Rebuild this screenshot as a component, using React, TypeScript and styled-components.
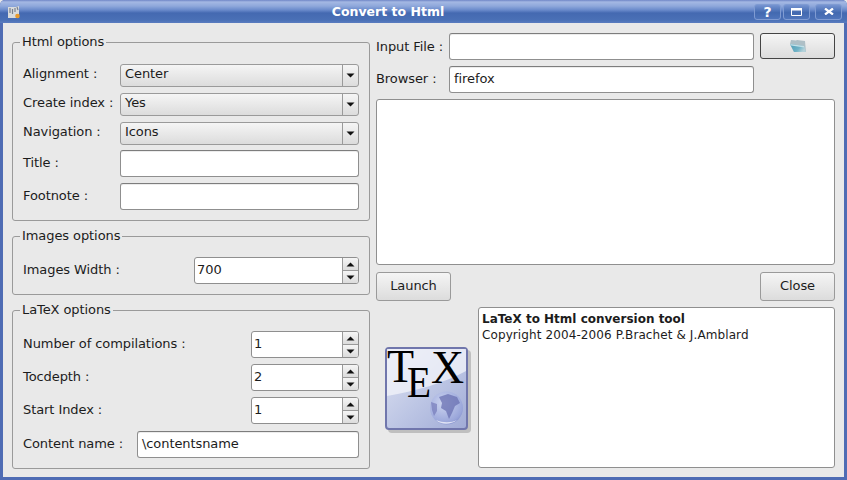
import React from 'react';
import styled, { createGlobalStyle } from 'styled-components';

const GlobalStyle = createGlobalStyle`
  html, body {
    margin: 0;
    padding: 0;
    background: #e9e9e9;
  }
  * {
    box-sizing: border-box;
  }
`;

const comboRows = [
  { label: 'Alignment :', value: 'Center' },
  { label: 'Create index :', value: 'Yes' },
  { label: 'Navigation :', value: 'Icons' },
];

const latexSpins = [
  { label: 'Number of compilations :', value: '1' },
  { label: 'Tocdepth :', value: '2' },
  { label: 'Start Index :', value: '1' },
];

const Arrow = ({ up }: { up?: boolean }) => (
  <svg width="9" height="5" viewBox="0 0 9 5">
    <path d={up ? 'M4.5 0.5 L8.5 4.5 L0.5 4.5 Z' : 'M0.5 0.5 L8.5 0.5 L4.5 4.5 Z'} fill="#111" />
  </svg>
);

const Combo = ({ value }: { value: string }) => (
  <ComboBox>
    <ComboText>{value}</ComboText>
    <ComboArrow>
      <Arrow />
    </ComboArrow>
  </ComboBox>
);

const Spin = ({ value, width }: { value: string; width: number }) => (
  <SpinBox $width={width}>
    <SpinText>{value}</SpinText>
    <SpinButtons>
      <SpinButton>
        <Arrow up />
      </SpinButton>
      <SpinButton>
        <Arrow />
      </SpinButton>
    </SpinButtons>
  </SpinBox>
);

const App = () => {
  return (
    <Window>
      <GlobalStyle />
      <TitleBar>
        <AppIcon>
          <svg width="14" height="14" viewBox="0 0 14 14">
            <path d="M1 2 H9 L12 1 V13 H1 Z" fill="#d9dbdc" />
            <path d="M3 3 V8 M5.5 4 V9 M8 3 V7 M10 2 L11 5" stroke="#78808e" strokeWidth="1.2" />
            <circle cx="10.5" cy="11" r="2.3" fill="#e89a2c" />
          </svg>
        </AppIcon>
        <Title>Convert to Html</Title>
        <TitleButtons>
          <TitleButton>
            <HelpMark>?</HelpMark>
          </TitleButton>
          <TitleButton>
            <svg width="11" height="8" viewBox="0 0 11 8">
              <path d="M0.5 0.5 H10.5 V7.5 H0.5 Z" fill="none" stroke="#fff" />
              <rect x="0" y="0" width="11" height="2.5" fill="#fff" />
            </svg>
          </TitleButton>
          <CloseButton>
            <svg width="10" height="7" viewBox="0 0 10 7">
              <path d="M1 0.5 L9 6.5 M9 0.5 L1 6.5" stroke="#fff" strokeWidth="2.2" />
            </svg>
          </CloseButton>
        </TitleButtons>
      </TitleBar>
      <Body>
        <LeftColumn>
          <Group $height={179}>
            <GroupTitle>Html options</GroupTitle>
            <ComboList>
              {comboRows.map((row) => (
                <Row key={row.label} $labelWidth={97}>
                  <ComboLabel>{row.label}</ComboLabel>
                  <Combo value={row.value} />
                </Row>
              ))}
            </ComboList>
            <InputList>
              <Row $labelWidth={97}>
                <Label>Title :</Label>
                <Field />
              </Row>
              <Row $labelWidth={97}>
                <Label>Footnote :</Label>
                <Field />
              </Row>
            </InputList>
          </Group>
          <Group $height={59}>
            <GroupTitle>Images options</GroupTitle>
            <SpinRow>
              <Label>Images Width :</Label>
              <Spin value="700" width={165} />
            </SpinRow>
          </Group>
          <Group $height={159}>
            <GroupTitle>LaTeX options</GroupTitle>
            <SpinList>
              {latexSpins.map((row) => (
                <SpinRow key={row.label}>
                  <Label>{row.label}</Label>
                  <Spin value={row.value} width={108} />
                </SpinRow>
              ))}
            </SpinList>
            <ContentRow $labelWidth={114}>
              <Label>Content name :</Label>
              <Field>\contentsname</Field>
            </ContentRow>
          </Group>
        </LeftColumn>
        <RightColumn>
          <FileRow>
            <Label>Input File :</Label>
            <Field />
            <FolderButton>
              <svg width="18" height="14" viewBox="0 0 18 14">
                <defs>
                  <linearGradient id="folder" x1="0" y1="0" x2="1" y2="0.4">
                    <stop offset="0" stopColor="#4f9db6" />
                    <stop offset="0.65" stopColor="#6fb2c6" />
                    <stop offset="1" stopColor="#b4d2da" />
                  </linearGradient>
                </defs>
                <path d="M1 5 L2 1 L7 1.5 L8 1 L16 2 L17 13 L5 13 Z" fill="#aebfc6" />
                <path d="M1 5 L15 7 L17 13 L5 13 Z" fill="url(#folder)" />
                <path d="M1 5 L15 7 L15.5 8.5 L2 6.5 Z" fill="#c3e0e8" />
              </svg>
            </FolderButton>
          </FileRow>
          <BrowserRow>
            <Label>Browser :</Label>
            <Field>firefox</Field>
          </BrowserRow>
          <Output />
          <ActionRow>
            <PushButton>Launch</PushButton>
            <PushButton>Close</PushButton>
          </ActionRow>
          <AboutRow>
            <LogoCell>
              <svg width="88" height="88" viewBox="0 0 88 88">
                <defs>
                  <linearGradient id="tile" x1="0" y1="0" x2="1" y2="1">
                    <stop offset="0" stopColor="#dfe3f2" />
                    <stop offset="0.55" stopColor="#bcc5e4" />
                    <stop offset="1" stopColor="#a0abd6" />
                  </linearGradient>
                  <radialGradient id="globe" cx="0.4" cy="0.35" r="0.8">
                    <stop offset="0" stopColor="#cdd5f0" />
                    <stop offset="0.75" stopColor="#9aa6da" />
                    <stop offset="1" stopColor="#7683c4" />
                  </radialGradient>
                </defs>
                <rect x="3" y="3" width="83" height="83" rx="4" fill="#9c9c9c" opacity="0.55" />
                <rect x="1" y="1" width="81" height="81" rx="3" fill="url(#tile)" stroke="#7076ac" strokeWidth="2" />
                <path d="M2 2 H81 V24 C60 36 30 44 2 49 Z" fill="#f3f4fa" opacity="0.75" />
                <circle cx="61.5" cy="61" r="16.5" fill="url(#globe)" />
                <path d="M54 50 L63 47 L72 50 L75 56 L70 59 L67 66 L64 72 L61 64 L56 61 L57 56 Z" fill="#6a70b2" opacity="0.75" />
                <path d="M46 55 L52 57 L52 64 L49 69 L47 63 Z" fill="#6a70b2" opacity="0.6" />
                <path d="M51 73 C58 76 66 76 72 73 C66 78 56 78 51 73 Z" fill="#f1f2fa" opacity="0.8" />
                <LogoText x="2" y="35" fontSize="46" textLength="27" lengthAdjust="spacingAndGlyphs">T</LogoText>
                <LogoText x="22" y="50" fontSize="45" textLength="24" lengthAdjust="spacingAndGlyphs">E</LogoText>
                <LogoText x="46" y="36" fontSize="47" textLength="33" lengthAdjust="spacingAndGlyphs">X</LogoText>
              </svg>
            </LogoCell>
            <AboutBox>
              <AboutTitle>LaTeX to Html conversion tool</AboutTitle>
              <AboutLine>Copyright 2004-2006 P.Brachet &amp; J.Amblard</AboutLine>
            </AboutBox>
          </AboutRow>
        </RightColumn>
      </Body>
    </Window>
  );
};

export default App;

const Window = styled.div`
  width: 847px;
  height: 480px;
  display: flex;
  flex-direction: column;
  background: #4f6cb4;
  border-radius: 5px 5px 0 0;
  overflow: hidden;
  font-family: 'DejaVu Sans', sans-serif;
  font-size: 13px;
  letter-spacing: -0.08px;
  color: #1c1c1c;
`;

const TitleBar = styled.div`
  position: relative;
  flex: 0 0 23px;
  display: flex;
  align-items: center;
  justify-content: space-between;
  padding: 0 5px 0 7px;
  background: linear-gradient(
    #6f86c6 0,
    #a4b8e3 2px,
    #8fa8db 6px,
    #6a8acb 10px,
    #4469b1 13px,
    #4a70b6 20px,
    #5a7cc0 23px
  );
`;

const AppIcon = styled.div`
  display: flex;
  width: 14px;
`;

const Title = styled.div`
  position: absolute;
  left: 0;
  right: 71px;
  top: 4px;
  text-align: center;
  font-weight: 700;
  font-size: 12.5px;
  letter-spacing: 0;
  color: #fff;
  line-height: 16px;
`;

const TitleButtons = styled.div`
  display: flex;
  gap: 2px;
`;

const TitleButton = styled.div`
  width: 27px;
  height: 16px;
  display: flex;
  align-items: center;
  justify-content: center;
  border: 1px solid #7f9bd2;
  border-radius: 3px;
  background: linear-gradient(#7694d1, #4269b0 55%, #4f75bb);
`;

const CloseButton = styled(TitleButton)`
  margin-left: 3px;
`;

const HelpMark = styled.span`
  color: #fff;
  font-weight: 700;
  font-size: 14px;
  line-height: 14px;
`;

const Body = styled.div`
  flex: 1;
  margin: 0 3px 3px;
  padding: 10px 9px 0;
  display: flex;
  gap: 6px;
  background: #e9e9e9;
`;

const LeftColumn = styled.div`
  width: 358px;
  padding-top: 9px;
  display: flex;
  flex-direction: column;
  gap: 15px;
`;

const RightColumn = styled.div`
  width: 459px;
  display: flex;
  flex-direction: column;
`;

const Group = styled.div<{ $height: number }>`
  position: relative;
  height: ${(p) => p.$height}px;
  padding: 0 10px 10px;
  border: 1px solid #9a9a9a;
  border-radius: 3px;
  display: flex;
  flex-direction: column;
  justify-content: flex-end;
`;

const GroupTitle = styled.div`
  position: absolute;
  left: 7px;
  top: -9px;
  padding: 0 2px;
  background: #e9e9e9;
  line-height: 15px;
`;

const ComboList = styled.div`
  display: flex;
  flex-direction: column;
  gap: 6px;
  margin-bottom: 5px;
`;

const InputList = styled.div`
  display: flex;
  flex-direction: column;
  gap: 6px;
`;

const Row = styled.div<{ $labelWidth: number }>`
  display: grid;
  grid-template-columns: ${(p) => p.$labelWidth}px 1fr;
  align-items: center;
`;

const ContentRow = styled(Row)`
  margin-top: 7px;
`;

const SpinRow = styled.div`
  display: flex;
  align-items: center;
  justify-content: space-between;
`;

const SpinList = styled.div`
  display: flex;
  flex-direction: column;
  gap: 6px;
`;

const Label = styled.span`
  white-space: nowrap;
  line-height: 16px;
  padding-bottom: 2px;
`;

const ComboLabel = styled(Label)`
  padding-bottom: 4px;
`;

const ComboBox = styled.div`
  height: 23px;
  display: flex;
  align-items: center;
  border: 1px solid #9a9a9a;
  border-radius: 3px;
  background: linear-gradient(#f5f5f5, #dcdcdc);
`;

const ComboText = styled.span`
  flex: 1;
  padding: 0 0 4px 4px;
`;

const ComboArrow = styled.span`
  width: 16px;
  height: 100%;
  display: flex;
  align-items: center;
  justify-content: center;
  border-left: 1px solid #9a9a9a;
`;

const Field = styled.div`
  flex: 1;
  height: 27px;
  padding: 0 4px 2px;
  display: flex;
  align-items: center;
  background: #fff;
  border: 1px solid #8f8f8f;
  border-top-color: #7d7d7d;
  border-radius: 3px;
  box-shadow: inset 0 1px 0 #ececec;
`;

const SpinBox = styled.div<{ $width: number }>`
  width: ${(p) => p.$width}px;
  height: 27px;
  display: flex;
  border: 1px solid #8f8f8f;
  border-radius: 3px;
  background: #fff;
  overflow: hidden;
`;

const SpinText = styled.span`
  flex: 1;
  padding-left: 2px;
  line-height: 23px;
`;

const SpinButtons = styled.div`
  width: 16px;
  display: flex;
  flex-direction: column;
  border-left: 1px solid #9a9a9a;
`;

const SpinButton = styled.div`
  flex: 1;
  display: flex;
  align-items: center;
  justify-content: center;
  background: linear-gradient(#f5f5f5, #dcdcdc);
  & + & {
    border-top: 1px solid #9a9a9a;
  }
`;

const FileRow = styled.div`
  display: grid;
  grid-template-columns: 73px 305px 81px;
  align-items: start;
  & > span {
    line-height: 27px;
    padding-bottom: 0;
  }
`;

const BrowserRow = styled.div`
  display: grid;
  grid-template-columns: 73px 305px;
  align-items: center;
  margin-top: 6px;
`;

const PushButton = styled.div`
  width: 75px;
  height: 29px;
  padding-bottom: 2px;
  display: flex;
  align-items: center;
  justify-content: center;
  border: 1px solid #9a9a9a;
  border-radius: 3px;
  background: linear-gradient(#f5f5f5, #dcdcdc);
`;

const FolderButton = styled(PushButton)`
  height: 26px;
  padding-bottom: 0;
  margin-left: 6px;
  border-color: #444;
`;

const Output = styled.div`
  height: 166px;
  margin-top: 6px;
  background: #fff;
  border: 1px solid #8f8f8f;
  border-radius: 3px;
`;

const ActionRow = styled.div`
  display: flex;
  justify-content: space-between;
  margin-top: 7px;
`;

const AboutRow = styled.div`
  display: flex;
  gap: 8px;
  margin-top: 6px;
`;

const LogoCell = styled.div`
  width: 94px;
  height: 161px;
  padding: 40px 0 0 9px;
`;

const LogoText = styled.text`
  font-family: 'Liberation Serif', serif;
  fill: #000;
`;

const AboutBox = styled.div`
  width: 357px;
  height: 161px;
  padding: 3px;
  background: #fff;
  border: 1px solid #8f8f8f;
  border-radius: 3px;
  font-size: 12px;
  letter-spacing: 0;
  line-height: 16px;
`;

const AboutTitle = styled.div`
  font-weight: 700;
`;

const AboutLine = styled.div`
  letter-spacing: 0.1px;
`;
